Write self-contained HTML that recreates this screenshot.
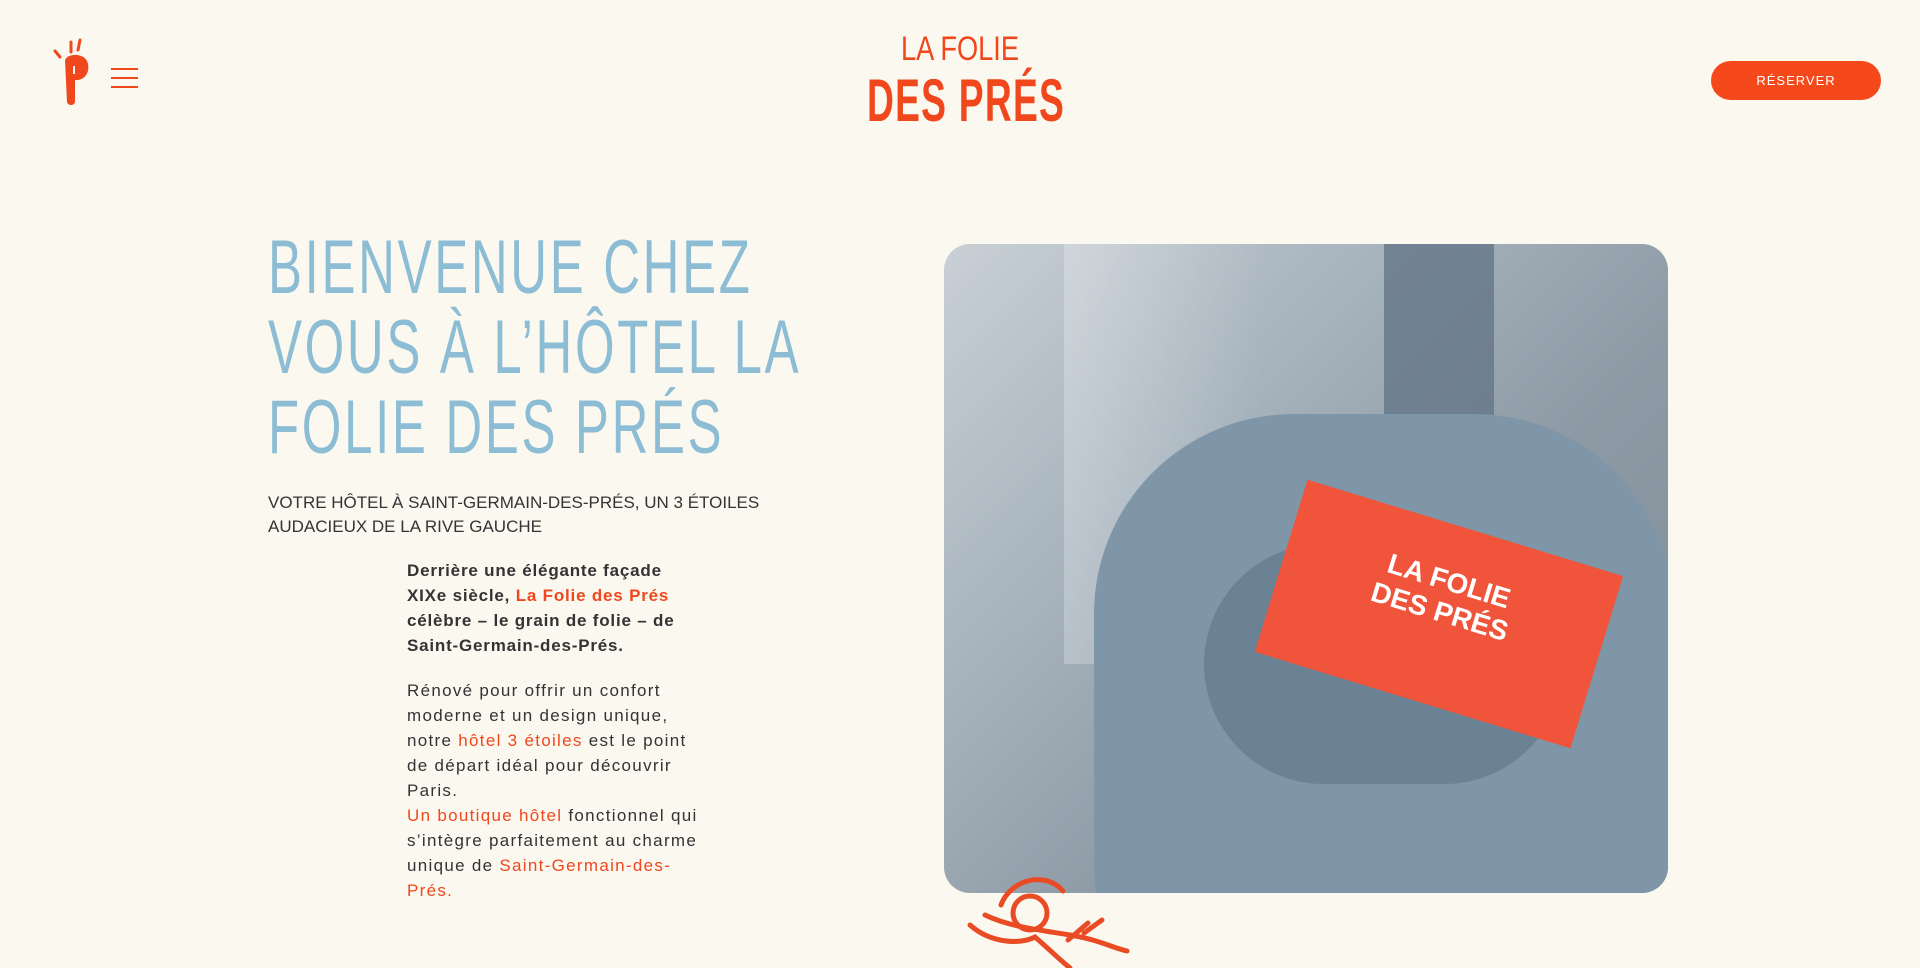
<!DOCTYPE html>
<html><head><meta charset="utf-8"><style>
*{margin:0;padding:0;box-sizing:border-box}
body{width:1920px;height:968px;overflow:hidden;background:#fbf8f0;font-family:"Liberation Sans",sans-serif;position:relative}
.abs{position:absolute}
.h1{left:268px;top:228px;color:#8dbcd5;font-size:76px;line-height:80px;letter-spacing:4px;transform:scaleX(.67);transform-origin:left top;white-space:nowrap;font-weight:400}
.sub{left:268px;top:491px;font-size:17px;line-height:24px;color:#333;width:510px}
.p{left:407px;width:292px;font-size:17px;line-height:25px;letter-spacing:1.3px;color:#333}
.o{color:#f0471d}
.img{left:944px;top:244px;width:724px;height:649px;border-radius:26px;overflow:hidden;background:linear-gradient(135deg,#c9d0d6 0%,#a9b5bf 30%,#8d9aa5 60%,#7f8a93 100%)}
.btn{left:1711px;top:61px;width:170px;height:39px;border-radius:20px;background:#f5491c;color:#fff;font-size:13px;text-align:center;line-height:39px;letter-spacing:1px}
.logo{color:#f0471d;text-align:center;left:810px;width:300px;font-weight:700;white-space:nowrap}
</style></head><body>
<svg class="abs" style="left:50px;top:38px" width="50" height="70" viewBox="0 0 50 70"><path d="M5 13l5 6M21 4v10M30 2l-2 10" stroke="#f0471d" stroke-width="3" stroke-linecap="round"/><path d="M15 22c3-7 18-7 22 1 4 9-1 20-12 19l0 22c-1 4-7 4-8 0z" fill="#f0471d"/><path d="M24 28v8" stroke="#fbf8f0" stroke-width="2"/></svg>
<div class="abs" style="left:111px;top:68px;width:27px;height:2px;background:#f0471d"></div>
<div class="abs" style="left:111px;top:77px;width:27px;height:2px;background:#f0471d"></div>
<div class="abs" style="left:111px;top:86px;width:27px;height:2px;background:#f0471d"></div>
<div class="abs logo" style="top:30px;font-size:34px;font-weight:400;transform:scaleX(.8)">LA FOLIE</div>
<div class="abs logo" style="top:66px;font-size:60px;transform:scaleX(.62);letter-spacing:2px">DES PRÉS</div>
<div class="abs btn">RÉSERVER</div>
<div class="abs h1">BIENVENUE CHEZ<br>VOUS À L’HÔTEL LA<br>FOLIE DES PRÉS</div>
<div class="abs sub">VOTRE HÔTEL À SAINT-GERMAIN-DES-PRÉS, UN 3 ÉTOILES AUDACIEUX DE LA RIVE GAUCHE</div>
<div class="abs p" style="top:558px;font-weight:700;letter-spacing:.8px;width:300px">Derrière une élégante façade<br>XIXe siècle, <span class="o">La Folie des Prés</span> célèbre – le grain de folie – de Saint-Germain-des-Prés.</div>
<div class="abs p" style="top:678px">Rénové pour offrir un confort moderne et un design unique, notre <span class="o">hôtel 3 étoiles</span> est le point de départ idéal pour découvrir Paris.<br><span class="o">Un boutique hôtel</span> fonctionnel qui s’intègre parfaitement au charme unique de <span class="o">Saint-Germain-des-Prés.</span></div>
<div class="abs img">
<div class="abs" style="left:120px;top:0;width:200px;height:420px;background:linear-gradient(90deg,rgba(255,255,255,.25),rgba(255,255,255,0))"></div>
<div class="abs" style="left:440px;top:0;width:110px;height:230px;background:#5d6f82;opacity:.7"></div>
<div class="abs" style="left:150px;top:170px;width:580px;height:520px;border-radius:200px 200px 60px 60px;background:#7f95a8"></div>
<div class="abs" style="left:260px;top:300px;width:360px;height:240px;border-radius:120px;background:#6b8194"></div>
<div class="abs" style="left:330px;top:280px;width:330px;height:180px;background:#f0543a;transform:rotate(17deg);color:#fff;text-align:center;font-weight:700;padding-top:40px;font-size:28px;line-height:32px">LA FOLIE<br>DES PRÉS</div>
</div>
<svg class="abs" style="left:960px;top:875px" width="200" height="93" viewBox="0 0 200 93"><g fill="none" stroke="#e94b24" stroke-width="5" stroke-linecap="round"><path d="M41 30C50 5 85 -5 103 16"/><circle cx="70" cy="38" r="17"/><path d="M25 40C50 52 80 55 110 60S150 72 167 76"/><path d="M10 50C30 68 60 70 75 62C90 75 100 85 110 93"/><path d="M108 65l20-17M124 58l18-13"/></g></svg>
</body></html>
